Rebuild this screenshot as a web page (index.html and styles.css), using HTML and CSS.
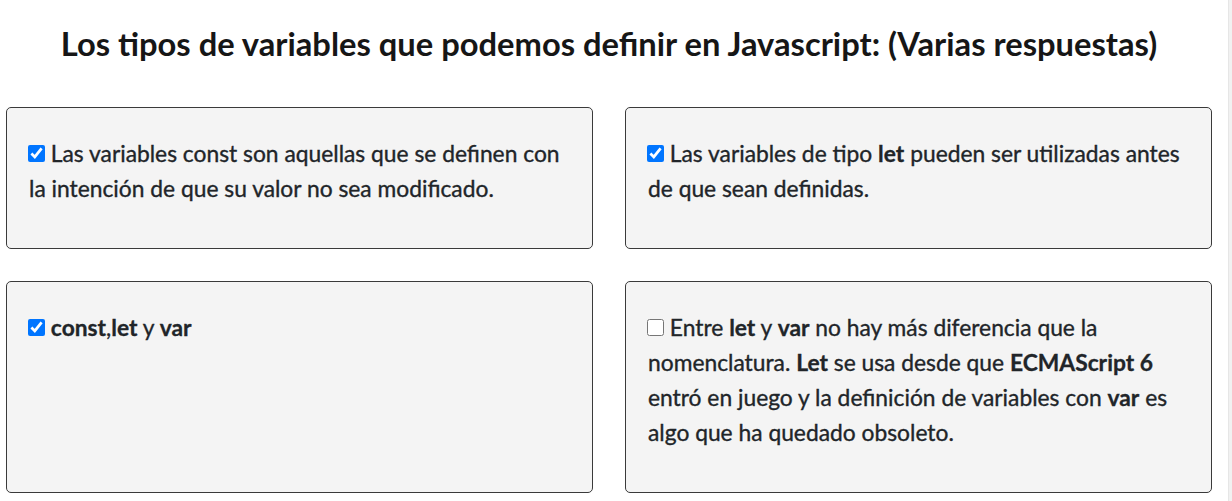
FILE: index.html
```html
<!DOCTYPE html>
<html lang="es">
<head>
<meta charset="utf-8">
<title>Quiz</title>
<link rel="stylesheet" href="styles.css">
</head>
<body>
<div class="page">
  <main class="quiz">
    <h1 class="title">Los tipos de variables que podemos definir en Javascript: (Varias respuestas)</h1>
    <div class="answers">
      <label class="card"><span class="text"><input type="checkbox" class="check" checked> Las variables const son aquellas que se definen con la intención de que su valor no sea modificado.</span></label>
      <label class="card"><span class="text"><input type="checkbox" class="check" checked> Las variables de tipo <b>let</b> pueden ser utilizadas antes de que sean definidas.</span></label>
      <label class="card"><span class="text"><input type="checkbox" class="check" checked> <b>const</b>,<b>let</b> y <b>var</b></span></label>
      <label class="card"><span class="text"><input type="checkbox" class="check"> Entre <b>let</b> y <b>var</b> no hay más diferencia que la nomenclatura. <b>Let</b> se usa desde que <b>ECMAScript 6</b> entró en juego y la definición de variables con <b>var</b> es algo que ha quedado obsoleto.</span></label>
    </div>
  </main>
  <div class="gutter"></div>
</div>
</body>
</html>
```
FILE: styles.css
```css
html, body {
  margin: 0;
  padding: 0;
  background: #ffffff;
}
body {
  font-family: Lato, "Liberation Sans", sans-serif;
  color: #212529;
}
.page {
  display: flex;
  min-height: 100vh;
}
.quiz {
  flex: 1;
  padding: 0 16px 0 6px;
}
.title {
  margin: 25px 0 44px;
  font-size: 32.7px;
  line-height: 38px;
  font-weight: 700;
  text-align: center;
  color: #161616;
}
.answers {
  display: grid;
  grid-template-columns: 1fr 1fr;
  gap: 32px;
}
.card {
  display: block;
  background: #f4f4f4;
  border: 1px solid #3a3a3a;
  border-radius: 5px;
  padding: 28px 22px 42px;
  font-size: 22.8px;
  line-height: 35px;
  font-weight: 400;
  -webkit-text-stroke: 0.35px #212529;
}
.card b {
  font-weight: 700;
  -webkit-text-stroke: 0.3px #212529;
}
.check {
  width: 17px;
  height: 17px;
  margin: 0 0 0 -1px;
  vertical-align: baseline;
}
.gutter {
  width: 3px;
  flex: none;
  border-left: 1px solid #e6e6e6;
  background: #f1f1f1;
}
```
